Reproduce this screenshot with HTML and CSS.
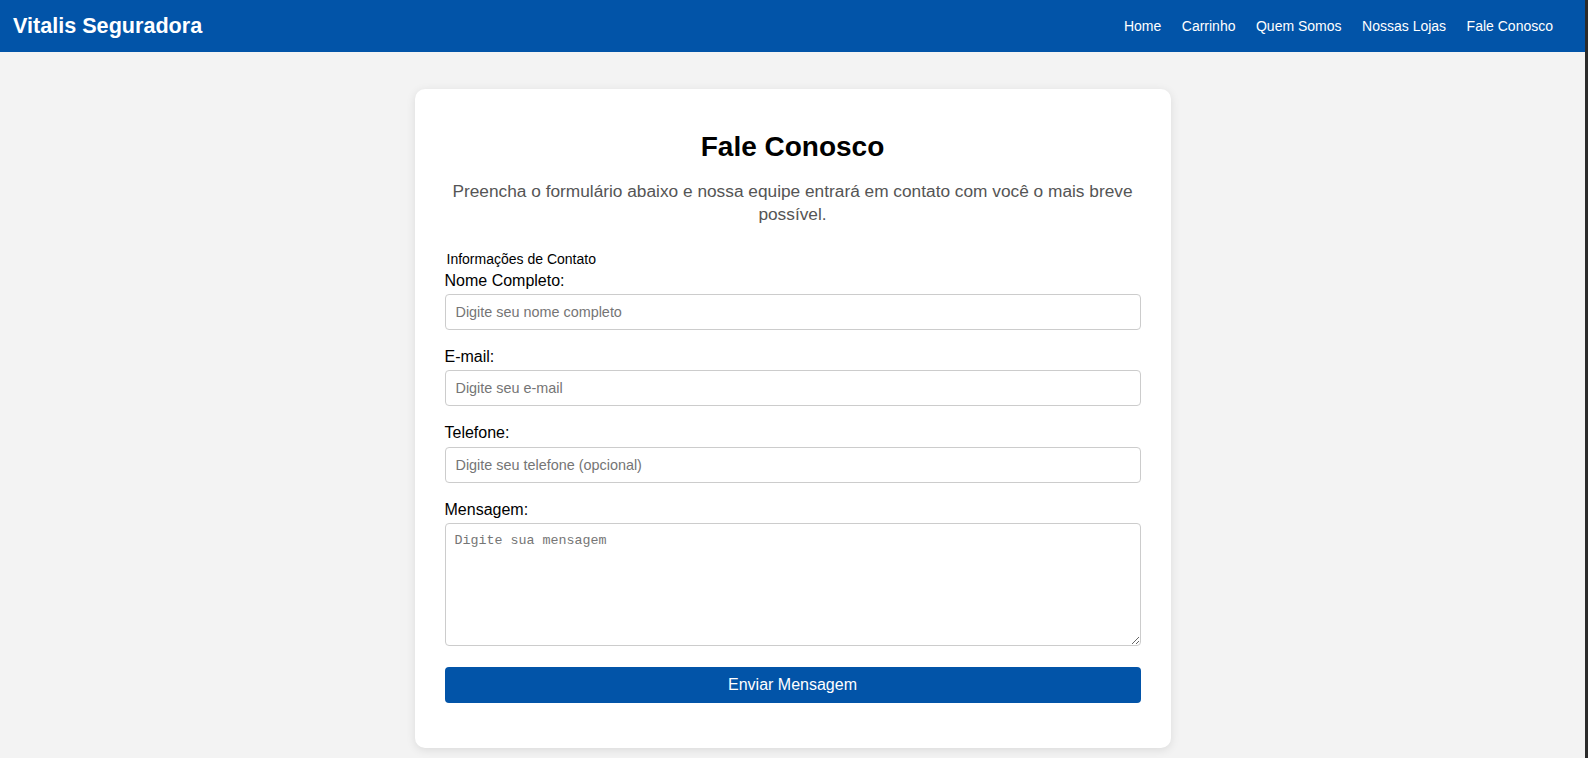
FILE: index.html
```html
<!DOCTYPE html>
<html lang="pt-BR">
<head>
<meta charset="utf-8">
<title>Fale Conosco - Vitalis Seguradora</title>
<link rel="stylesheet" href="styles.css">
</head>
<body>
<div class="page">
  <header class="topbar">
    <div class="logo">Vitalis Seguradora</div>
    <nav class="nav">
      <a href="#">Home</a>
      <a href="#">Carrinho</a>
      <a href="#">Quem Somos</a>
      <a href="#">Nossas Lojas</a>
      <a href="#">Fale Conosco</a>
    </nav>
  </header>
  <main class="main">
    <section class="card">
      <h1 class="title">Fale Conosco</h1>
      <p class="intro">Preencha o formulário abaixo e nossa equipe entrará em contato com você o mais breve possível.</p>
      <form class="form">
        <fieldset class="fieldset">
          <legend class="legend">Informações de Contato</legend>
          <div class="group">
            <label class="label" for="nome">Nome Completo:</label>
            <input class="input" id="nome" type="text" placeholder="Digite seu nome completo">
          </div>
          <div class="group">
            <label class="label" for="email">E-mail:</label>
            <input class="input" id="email" type="email" placeholder="Digite seu e-mail">
          </div>
          <div class="group">
            <label class="label" for="tel">Telefone:</label>
            <input class="input" id="tel" type="tel" placeholder="Digite seu telefone (opcional)">
          </div>
          <div class="group">
            <label class="label" for="msg">Mensagem:</label>
            <textarea class="textarea" id="msg" placeholder="Digite sua mensagem"></textarea>
          </div>
        </fieldset>
        <button class="button" type="button">Enviar Mensagem</button>
      </form>
    </section>
  </main>
</div>
<div class="edge"></div>
</body>
</html>
```

FILE: styles.css
```css
* { box-sizing: border-box; }
html, body { margin: 0; padding: 0; height: 100%; }
body {
  display: flex;
  font-family: "Liberation Sans", Arial, sans-serif;
  background: #f3f3f3;
  color: #000;
}
.page { flex: 1; min-width: 0; display: flex; flex-direction: column; }
.edge { width: 3px; background: #2b2b2b; flex: none; }

.topbar {
  height: 52px;
  background: #0254a8;
  display: flex;
  align-items: center;
  justify-content: space-between;
  padding: 0 32px 0 13px;
  color: #fff;
}
.logo { font-weight: bold; font-size: 21.6px; }
.nav { display: flex; gap: 20.5px; }
.nav a { color: #fff; text-decoration: none; font-size: 14px; }

.main { display: flex; justify-content: center; padding-top: 37px; }
.card {
  width: 756px;
  background: #fff;
  border-radius: 10px;
  box-shadow: 0 2px 10px rgba(0,0,0,0.1);
  padding: 30px 30px 45px 30px;
}
.title { font-size: 28px; text-align: center; margin: 12px 0 0 0; line-height: 32px; }
.intro {
  font-size: 17.3px;
  line-height: 23.3px;
  color: #555;
  text-align: center;
  margin: 17px 0 0 0;
}
.form { margin-top: 24px; }
.fieldset { border: none; padding: 0; margin: 0; min-width: 0; }
.legend { font-size: 14px; padding: 0 2px; margin-bottom: 5px; }
.group { margin-bottom: 18px; display: flex; flex-direction: column; }
.label { font-size: 16px; margin-bottom: 4px; line-height: 18.4px; }
.input, .textarea {
  width: 100%;
  border: 1px solid #ccc;
  border-radius: 4px;
  padding: 9px 10px;
  font-family: "Liberation Sans", Arial, sans-serif;
  font-size: 14.4px;
  line-height: 16px;
  color: #000;
  background: #fff;
}
.input::placeholder { color: #757575; }
.textarea {
  height: 123px;
  font-family: "Liberation Mono", monospace;
  font-size: 13.33px;
  padding: 9px 9px;
  resize: vertical;
}
.textarea::placeholder { color: #757575; }
.button {
  display: block;
  width: 100%;
  height: 36px;
  margin-top: 3px;
  border: none;
  border-radius: 4px;
  background: #0254a8;
  color: #fff;
  font-family: "Liberation Sans", Arial, sans-serif;
  font-size: 16px;
}
```
